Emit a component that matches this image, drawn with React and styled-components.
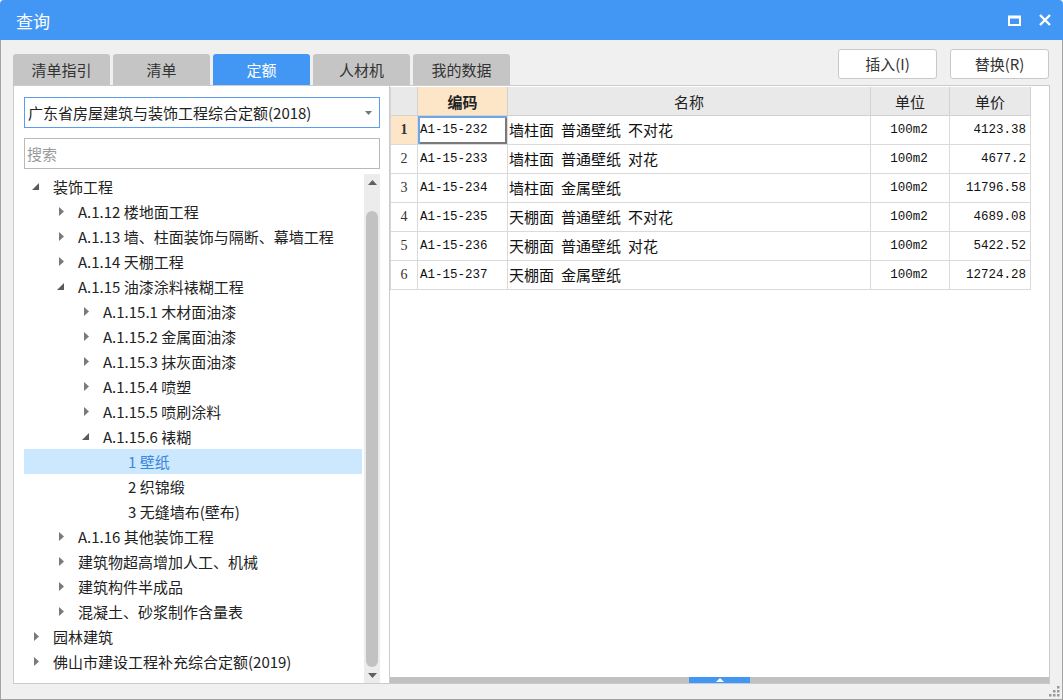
import React from "react";
import styled, { createGlobalStyle, css } from "styled-components";

const GlobalStyle = createGlobalStyle`
  html, body { margin: 0; padding: 0; background: #ffffff; }
  body { font-family: "Noto Sans CJK SC", "Noto Sans", sans-serif; color: #222; }
  * { box-sizing: border-box; }
`;

const BLUE = "#4297f5";

const Window = styled.div`
  width: 1063px;
  height: 700px;
  display: flex;
  flex-direction: column;
  position: relative;
  overflow: hidden;
  border-radius: 4px 4px 0 0;
`;

const TitleBar = styled.div`
  height: 40px;
  flex-shrink: 0;
  background: ${BLUE};
  display: flex;
  align-items: center;
  justify-content: space-between;
  padding: 0 12px 0 16px;
`;

const Title = styled.div`
  color: #fff;
  font-size: 17px;
`;

const Controls = styled.div`
  display: flex;
  align-items: center;
  gap: 18px;
`;

const Body = styled.div`
  flex: 1;
  display: flex;
  flex-direction: column;
  background: #f0f0f0;
  border: 1px solid #a3a3a3;
  border-top: none;
  padding: 0 12px 15px 12px;
`;

const TopRow = styled.div`
  height: 45px;
  display: flex;
  justify-content: space-between;
`;

const Tabs = styled.div`
  display: flex;
  gap: 3px;
  align-self: flex-end;
`;

const Tab = styled.div`
  width: 97px;
  height: 31px;
  line-height: 31px;
  text-align: center;
  font-size: 15px;
  border-radius: 3px 3px 0 0;
  background: #c5c5c5;
  color: #333;
  ${(p) =>
    p.$active &&
    css`
      background: ${BLUE};
      color: #fff;
    `}
`;

const Actions = styled.div`
  display: flex;
  gap: 13px;
  padding-top: 9px;
  padding-right: 1px;
`;

const Button = styled.div`
  width: 99px;
  height: 30px;
  line-height: 28px;
  text-align: center;
  font-size: 15px;
  color: #333;
  background: #fff;
  border: 1px solid #c8c8c8;
  border-radius: 3px;
`;

const Main = styled.div`
  flex: 1;
  display: flex;
  min-height: 0;
`;

const LeftPanel = styled.div`
  width: 376px;
  display: flex;
  flex-direction: column;
  background: #fff;
  border: 1px solid #cbcbcb;
  border-right: none;
  padding: 11px 9px 0 10px;
`;

const Select = styled.div`
  height: 31px;
  border: 1px solid #5a9df0;
  display: flex;
  align-items: center;
  justify-content: space-between;
  padding: 0 7px 0 3px;
  font-size: 15px;
  color: #222;
`;

const Search = styled.div`
  margin-top: 10px;
  height: 31px;
  border: 1px solid #b9b9b9;
  display: flex;
  align-items: center;
  padding-left: 2px;
  font-size: 15px;
  color: #9a9a9a;
`;

const TreeWrap = styled.div`
  margin-top: 5px;
  flex: 1;
  display: flex;
  min-height: 0;
  overflow: hidden;
`;

const TreeList = styled.div`
  flex: 1;
  padding-right: 2px;
`;

const TreeRow = styled.div`
  height: 25px;
  display: flex;
  align-items: center;
  padding-left: ${(p) => p.$level * 25}px;
  font-size: 15px;
  color: #222;
  white-space: nowrap;
  ${(p) =>
    p.$selected &&
    css`
      background: #cce8ff;
      color: #3a86dc;
    `}
`;

const Toggle = styled.span`
  width: 29px;
  height: 25px;
  display: flex;
  align-items: center;
  padding-left: ${(p) => (p.$open ? 8 : 10)}px;
  flex-shrink: 0;
`;

const ScrollBar = styled.div`
  width: 16px;
  display: flex;
  flex-direction: column;
  align-items: center;
  background: #ececec;
`;

const ScrollArrow = styled.div`
  height: 16px;
  width: 16px;
  display: flex;
  align-items: center;
  justify-content: center;
  flex-shrink: 0;
`;

const Thumb = styled.div`
  flex: 1;
  width: 12px;
  margin-top: 21px;
  border-radius: 6px;
  background: #c2c2c2;
`;

const RightPanel = styled.div`
  flex: 1;
  display: flex;
  flex-direction: column;
  background: #fff;
  border: 1px solid #cbcbcb;
`;

const TableArea = styled.div`
  flex: 1;
  padding-top: 1px;
`;

const Grid = styled.div`
  display: grid;
  grid-template-columns: 27px 90px 363px 79px 81px;
  grid-template-rows: 29px;
  grid-auto-rows: 29px;
  width: 640px;
  border-left: 1px solid #d6d6d6;
`;

const HeadCell = styled.div`
  display: flex;
  align-items: center;
  justify-content: center;
  font-size: 15px;
  color: #222;
  background: ${(p) => (p.$active ? "#fde5c8" : "#e9e9e9")};
  font-weight: ${(p) => (p.$active ? 700 : 400)};
  border-right: 1px solid #d2d2d2;
  border-bottom: 1px solid #d2d2d2;
`;

const Cell = styled.div`
  display: flex;
  align-items: center;
  justify-content: ${(p) =>
    p.$align === "right" ? "flex-end" : p.$align === "center" ? "center" : "flex-start"};
  padding: 0 4px 0 ${(p) => (p.$mono ? 2 : 1)}px;
  font-size: ${(p) => (p.$mono ? "12.5px" : "15px")};
  font-family: ${(p) =>
    p.$mono
      ? `"Liberation Mono", "Noto Sans CJK SC", monospace`
      : `"Liberation Mono", "Noto Sans CJK SC", sans-serif`};
  word-spacing: ${(p) => (p.$mono ? 0 : -2)}px;
  color: #111;
  border-right: 1px solid #dadada;
  border-bottom: 1px solid #dadada;
  white-space: nowrap;
  ${(p) =>
    p.$focus &&
    css`
      box-shadow: inset 2px 2px 0 #6fa6e8, inset -2px -2px 0 #7a7a7a;
    `}
`;

const RowNum = styled.div`
  display: flex;
  align-items: center;
  justify-content: center;
  font-family: "Liberation Serif", serif;
  font-size: 14px;
  color: #333;
  border-right: 1px solid #dadada;
  border-bottom: 1px solid #dadada;
  background: ${(p) => (p.$active ? "#fde5c8" : "#fff")};
  font-weight: ${(p) => (p.$active ? 700 : 400)};
`;

const Splitter = styled.div`
  height: 6px;
  background: #c1c1c1;
  display: flex;
  justify-content: center;
  flex-shrink: 0;
`;

const SplitHandle = styled.div`
  width: 61px;
  height: 6px;
  background: ${BLUE};
  display: flex;
  align-items: center;
  justify-content: center;
`;

const Grip = styled.svg`
  position: absolute;
  right: 3px;
  bottom: 3px;
`;

const tree = [
  { level: 0, text: "装饰工程", state: "open" },
  { level: 1, text: "A.1.12 楼地面工程", state: "closed" },
  { level: 1, text: "A.1.13 墙、柱面装饰与隔断、幕墙工程", state: "closed" },
  { level: 1, text: "A.1.14 天棚工程", state: "closed" },
  { level: 1, text: "A.1.15 油漆涂料裱糊工程", state: "open" },
  { level: 2, text: "A.1.15.1 木材面油漆", state: "closed" },
  { level: 2, text: "A.1.15.2 金属面油漆", state: "closed" },
  { level: 2, text: "A.1.15.3 抹灰面油漆", state: "closed" },
  { level: 2, text: "A.1.15.4 喷塑", state: "closed" },
  { level: 2, text: "A.1.15.5 喷刷涂料", state: "closed" },
  { level: 2, text: "A.1.15.6 裱糊", state: "open" },
  { level: 3, text: "1 壁纸", state: "leaf", selected: true },
  { level: 3, text: "2 织锦缎", state: "leaf" },
  { level: 3, text: "3 无缝墙布(壁布)", state: "leaf" },
  { level: 1, text: "A.1.16 其他装饰工程", state: "closed" },
  { level: 1, text: "建筑物超高增加人工、机械", state: "closed" },
  { level: 1, text: "建筑构件半成品", state: "closed" },
  { level: 1, text: "混凝土、砂浆制作含量表", state: "closed" },
  { level: 0, text: "园林建筑", state: "closed" },
  { level: 0, text: "佛山市建设工程补充综合定额(2019)", state: "closed" },
];

const rows = [
  ["A1-15-232", "墙柱面 普通壁纸 不对花", "100m2", "4123.38"],
  ["A1-15-233", "墙柱面 普通壁纸 对花", "100m2", "4677.2"],
  ["A1-15-234", "墙柱面 金属壁纸", "100m2", "11796.58"],
  ["A1-15-235", "天棚面 普通壁纸 不对花", "100m2", "4689.08"],
  ["A1-15-236", "天棚面 普通壁纸 对花", "100m2", "5422.52"],
  ["A1-15-237", "天棚面 金属壁纸", "100m2", "12724.28"],
];

const tabs = ["清单指引", "清单", "定额", "人材机", "我的数据"];

function Arrow({ state }) {
  if (state === "leaf") return <Toggle />;
  if (state === "open")
    return (
      <Toggle $open>
        <svg width="7" height="7" viewBox="0 0 7 7">
          <polygon points="7,0 7,7 0,7" fill="#5a5a5a" />
        </svg>
      </Toggle>
    );
  return (
    <Toggle>
      <svg width="5" height="9" viewBox="0 0 5 9">
        <polygon points="0,0 5,4.5 0,9" fill="#7a7a7a" />
      </svg>
    </Toggle>
  );
}

export default function App() {
  return (
    <>
      <GlobalStyle />
      <Window>
        <TitleBar>
          <Title>查询</Title>
          <Controls>
            <svg width="13" height="11" viewBox="0 0 13 11">
              <rect x="1" y="1.5" width="11" height="8.5" fill="none" stroke="#fff" strokeWidth="2" />
              <rect x="1" y="1" width="11" height="2.5" fill="#fff" />
            </svg>
            <svg width="12" height="12" viewBox="0 0 12 12">
              <path d="M1 1 L11 11 M11 1 L1 11" stroke="#fff" strokeWidth="2.4" />
            </svg>
          </Controls>
        </TitleBar>
        <Body>
          <TopRow>
            <Tabs>
              {tabs.map((t) => (
                <Tab key={t} $active={t === "定额"}>
                  {t}
                </Tab>
              ))}
            </Tabs>
            <Actions>
              <Button>插入(I)</Button>
              <Button>替换(R)</Button>
            </Actions>
          </TopRow>
          <Main>
            <LeftPanel>
              <Select>
                <span>广东省房屋建筑与装饰工程综合定额(2018)</span>
                <svg width="7" height="4" viewBox="0 0 7 4">
                  <polygon points="0,0 7,0 3.5,4" fill="#777" />
                </svg>
              </Select>
              <Search>搜索</Search>
              <TreeWrap>
                <TreeList>
                  {tree.map((n, i) => (
                    <TreeRow key={i} $level={n.level} $selected={n.selected}>
                      <Arrow state={n.state} />
                      {n.text}
                    </TreeRow>
                  ))}
                </TreeList>
                <ScrollBar>
                  <ScrollArrow>
                    <svg width="9" height="5" viewBox="0 0 9 5">
                      <polygon points="0,5 9,5 4.5,0" fill="#606060" />
                    </svg>
                  </ScrollArrow>
                  <Thumb />
                  <ScrollArrow>
                    <svg width="9" height="5" viewBox="0 0 9 5">
                      <polygon points="0,0 9,0 4.5,5" fill="#606060" />
                    </svg>
                  </ScrollArrow>
                </ScrollBar>
              </TreeWrap>
            </LeftPanel>
            <RightPanel>
              <TableArea>
                <Grid>
                  <HeadCell />
                  <HeadCell $active>编码</HeadCell>
                  <HeadCell>名称</HeadCell>
                  <HeadCell>单位</HeadCell>
                  <HeadCell>单价</HeadCell>
                  {rows.map((r, i) => (
                    <React.Fragment key={r[0]}>
                      <RowNum $active={i === 0}>{i + 1}</RowNum>
                      <Cell $mono $focus={i === 0}>
                        {r[0]}
                      </Cell>
                      <Cell>{r[1]}</Cell>
                      <Cell $mono $align="center">
                        {r[2]}
                      </Cell>
                      <Cell $mono $align="right">
                        {r[3]}
                      </Cell>
                    </React.Fragment>
                  ))}
                </Grid>
              </TableArea>
              <Splitter>
                <SplitHandle>
                  <svg width="8" height="4" viewBox="0 0 8 4">
                    <polygon points="0,4 8,4 4,0" fill="#fff" />
                  </svg>
                </SplitHandle>
              </Splitter>
            </RightPanel>
          </Main>
        </Body>
        <Grip width="11" height="11" viewBox="0 0 11 11">
          {[
            [8, 0],
            [8, 4],
            [4, 4],
            [8, 8],
            [4, 8],
            [0, 8],
          ].map(([x, y]) => (
            <rect key={`${x}-${y}`} x={x} y={y} width="2.5" height="2.5" fill="#9a9a9a" />
          ))}
        </Grip>
      </Window>
    </>
  );
}
